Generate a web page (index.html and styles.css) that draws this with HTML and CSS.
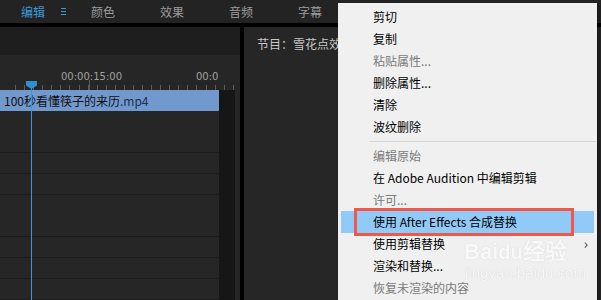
FILE: index.html
```html
<!DOCTYPE html>
<html lang="zh-CN">
<head>
    <meta charset="UTF-8">
    <title>编辑 - 时间轴</title>
    <link rel="stylesheet" href="styles.css">
</head>
<body>
    <div class="app">
        <div class="topbar">
            <span class="tab active">编辑</span>
            <span class="tab-menu">
                <svg width="5" height="7" viewBox="0 0 5 7"><rect x="0" y="0" width="5" height="1" fill="#3a9ad8"/><rect x="0" y="3" width="5" height="1" fill="#3a9ad8"/><rect x="0" y="6" width="5" height="1" fill="#3a9ad8"/></svg>
            </span>
            <span class="tab first">颜色</span>
            <span class="tab">效果</span>
            <span class="tab">音频</span>
            <span class="tab">字幕</span>
        </div>

        <div class="workspace">
            <div class="timeline">
                <div class="tl-head"></div>
                <div class="ruler">
                    <span class="timecode" style="left: 61px">00:00:15:00</span>
                    <span class="timecode" style="left: 196px">00:0</span>
                    <div class="ticks"></div>
                </div>
                <div class="tl-body">
                    <div class="tracks">
                        <div class="clip">100秒看懂筷子的来历<span class="ext">.mp4</span></div>
                        <div class="track tall"></div>
                        <div class="track"></div>
                        <div class="track"></div>
                        <div class="track tall"></div>
                        <div class="track"></div>
                        <div class="track"></div>
                        <div class="track"></div>
                    </div>
                    <div class="scroll-col"></div>
                </div>
                <div class="playhead">
                    <div class="playhead-cap"></div>
                </div>
            </div>
            <div class="split"></div>
            <div class="program">
                <div class="program-title">节目：雪花点效果</div>
            </div>
        </div>

        <!-- 右键菜单 -->
        <div class="ctx-menu">
            <div class="item">剪切</div>
            <div class="item">复制</div>
            <div class="item disabled">粘贴属性...</div>
            <div class="item">删除属性...</div>
            <div class="item">清除</div>
            <div class="item">波纹删除</div>
            <div class="menu-sep"></div>
            <div class="item disabled">编辑原始</div>
            <div class="item">在 Adobe Audition 中编辑剪辑</div>
            <div class="item disabled">许可...</div>
            <div class="item hover">使用 After Effects 合成替换<span class="mark"></span></div>
            <div class="item">使用剪辑替换<span class="arrow">›</span></div>
            <div class="item">渲染和替换...</div>
            <div class="item disabled">恢复未渲染的内容</div>
            <div class="watermark">
                <div class="wm-logo">Bai<span class="wm-du">du</span>经验</div>
                <div class="wm-url">jingyan.baidu.com</div>
            </div>
        </div>
    </div>
</body>
</html>
```

FILE: styles.css
```css
body {
    margin: 0;
    padding: 0;
    background-color: #262626;
    font-family: "Noto Sans CJK SC", "Noto Sans", sans-serif;
    font-size: 12px;
}
.app {
    position: relative;
    width: 601px;
    height: 300px;
    overflow: hidden;
    display: flex;
    flex-direction: column;
}
.topbar {
    height: 23px;
    background-color: #232323;
    border-bottom: 4px solid #000;
    display: flex;
    align-items: center;
    padding-left: 21px;
    padding-top: 1px;
    box-sizing: content-box;
}
.tab {
    color: #9c9c9c;
    line-height: 14px;
    margin-left: 45px;
}
.tab.active {
    color: #3a9ad8;
    margin-left: 0;
}
.tab.first {
    margin-left: 25px;
}
.tab-menu {
    display: flex;
    margin-left: 16px;
    margin-top: -1px;
}
.workspace {
    flex: 1;
    display: flex;
}
.timeline {
    position: relative;
    width: 240px;
    display: flex;
    flex-direction: column;
}
.tl-head {
    height: 28px;
    background-color: #1e1e1e;
}
.ruler {
    position: relative;
    height: 35px;
    background-color: #262626;
}
.timecode {
    position: absolute;
    top: 16px;
    font-family: "DejaVu Sans", sans-serif;
    font-size: 10px;
    line-height: 12px;
    color: #a2a2a2;
    white-space: nowrap;
}
.ticks {
    position: absolute;
    left: 0;
    right: 5px;
    bottom: 0;
    height: 5px;
    background-image: repeating-linear-gradient(90deg, transparent 0, transparent 8.07px, #5c5c5c 8.07px, #5c5c5c 9.07px);
    background-position: 7px 0;
}
.ticks::after {
    content: "";
    position: absolute;
    left: 89px;
    bottom: 0;
    width: 1px;
    height: 10px;
    background-color: #5c5c5c;
}
.tl-body {
    flex: 1;
    display: flex;
}
.tracks {
    width: 219px;
}
.clip {
    height: 21px;
    line-height: 21px;
    background-color: #7299cd;
    color: #111;
    padding-left: 4px;
    white-space: nowrap;
}
.clip .ext {
    color: #1c2f4a;
}
.track {
    height: 20px;
    border-bottom: 1px solid #1c1c1c;
}
.track.tall {
    height: 41px;
}
.scroll-col {
    width: 16px;
    background-color: #161616;
}
.playhead {
    position: absolute;
    left: 31px;
    top: 54px;
    bottom: 0;
    width: 1px;
    background-color: #3a9ad8;
}
.playhead-cap {
    position: absolute;
    left: -5px;
    top: 0;
    width: 11px;
    height: 8px;
    background-color: #2e90d2;
    clip-path: polygon(0 0, 100% 0, 100% 55%, 50% 100%, 0 55%);
}
.split {
    width: 4px;
    background-color: #000;
}
.program {
    flex: 1;
    background-color: #262626;
}
.program-title {
    color: #c8c8c8;
    padding: 10px 0 0 13px;
    line-height: 14px;
    white-space: nowrap;
}
.ctx-menu {
    position: absolute;
    left: 338px;
    top: 3px;
    width: 259px;
    height: 310px;
    padding-top: 3px;
    box-sizing: border-box;
    background-color: #f0f0f0;
    box-shadow: 2px 2px 3px rgba(0, 0, 0, 0.4);
}
.item {
    position: relative;
    height: 22px;
    line-height: 22px;
    margin: 0 3px;
    padding-left: 32px;
    color: #000;
    white-space: nowrap;
}
.item.disabled {
    color: #7a7a7a;
}
.item.hover {
    background-color: #91c9f7;
}
.mark {
    position: absolute;
    left: 13px;
    top: -3px;
    width: 214px;
    height: 22px;
    border: 3px solid #f0584a;
}
.arrow {
    position: absolute;
    right: 6px;
    top: -1px;
    font-size: 14px;
    color: #333;
}
.menu-sep {
    height: 7px;
    margin-left: 31px;
    margin-right: 1px;
    background: linear-gradient(#d7d7d7, #d7d7d7) 0 3px / 100% 1px no-repeat;
}
.watermark {
    position: absolute;
    left: 126px;
    top: 236px;
    color: #f8f8f8;
    text-shadow: 0 0 1px #dadada, 0 0 1px #dadada;
    pointer-events: none;
}
.wm-logo {
    font-family: "Liberation Sans", sans-serif;
    font-weight: bold;
    font-size: 22px;
    line-height: 26px;
}
.wm-du {
    font-size: 20px;
}
.wm-url {
    font-family: "Liberation Sans", sans-serif;
    font-size: 15px;
    line-height: 16px;
    padding-left: 1px;
}
```
